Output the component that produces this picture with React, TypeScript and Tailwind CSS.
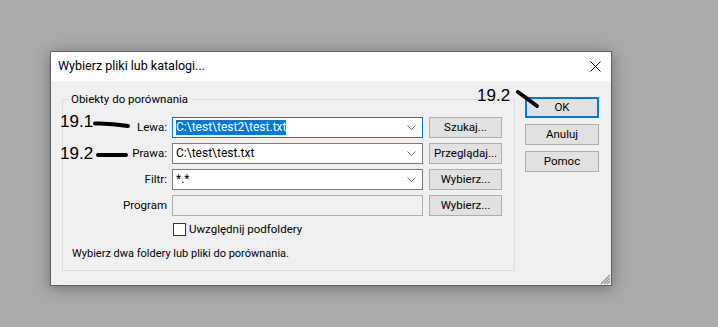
import React from 'react';

const ui = { fontFamily: 'Roboto, "Noto Sans", sans-serif' };
const ink = { fontFamily: '"Liberation Sans", Arial, sans-serif' };

function Chevron() {
  return (
    <svg width="9" height="5" viewBox="0 0 9 5" className="shrink-0">
      <path d="M0.5 0.5 L4.5 4.5 L8.5 0.5" fill="none" stroke="#6d6d6d" strokeWidth="1" />
    </svg>
  );
}

function Combo({ value, focused, selected }: { value: string; focused?: boolean; selected?: boolean }) {
  return (
    <div
      className={`w-[251px] h-[21px] bg-white flex items-center pl-[3px] pr-[6px] border text-[12px] ${
        focused ? 'border-[#0078d7]' : 'border-[#7a7a7a]'
      }`}
    >
      <div className="flex-1 min-w-0 flex">
        <span className={`leading-[15px] ${selected ? 'bg-[#0078d7] text-white' : 'text-black'}`}>{value}</span>
      </div>
      <Chevron />
    </div>
  );
}

function Btn({ label, w = 'w-[73px]', primary }: { label: string; w?: string; primary?: boolean }) {
  return (
    <div
      className={`${w} h-[21px] bg-[#e1e1e1] flex items-center justify-center text-black ${
        primary ? 'border-2 border-[#0078d7]' : 'border border-[#adadad]'
      }`}
    >
      {label}
    </div>
  );
}

export default function App() {
  const rows = [
    { label: 'Lewa:', value: 'C:\\test\\test2\\test.txt', btn: 'Szukaj...', focused: true, selected: true },
    { label: 'Prawa:', value: 'C:\\test\\test.txt', btn: 'Przeglądaj...' },
    { label: 'Filtr:', value: '*.*', btn: 'Wybierz...' },
  ];

  return (
    <div className="relative w-[718px] h-[327px] bg-[#aaaaaa] overflow-hidden pt-[51px] pl-[50px]" style={ui}>
      {/* okno dialogu */}
      <div className="w-[562px] h-[235px] flex flex-col border border-[#5f5f5f] shadow-[0_2px_14px_rgba(0,0,0,0.35)] text-[11.5px] text-black">
        <div className="h-[29px] bg-white flex items-center justify-between pl-[7px] pr-[10px] shrink-0">
          <span className="text-[12.5px]">Wybierz pliki lub katalogi...</span>
          <svg width="11" height="11" viewBox="0 0 11 11">
            <path d="M0.5 0.5 L10.5 10.5 M10.5 0.5 L0.5 10.5" stroke="#000" strokeWidth="1" />
          </svg>
        </div>

        <div className="relative flex-1 bg-[#f0f0f0] flex pl-[11px] pt-[18px]">
          {/* grupa */}
          <div className="relative w-[453px] h-[172px] border border-[#dcdcdc] flex flex-col pt-[17px]">
            <span className="absolute -top-[9px] left-[6px] px-[2px] bg-[#f0f0f0] leading-[16px]">
              Obiekty do porównania
            </span>

            {rows.map((r) => (
              <div key={r.label} className="flex items-center h-[21px] mb-[5px]">
                <span className="w-[105px] text-right pr-[1px]">{r.label}</span>
                <div className="ml-[4px]">
                  <Combo value={r.value} focused={r.focused} selected={r.selected} />
                </div>
                <div className="ml-[6px]">
                  <Btn label={r.btn} />
                </div>
              </div>
            ))}

            <div className="flex items-center h-[21px]">
              <span className="w-[105px] text-right pr-[1px]">Program</span>
              <div className="ml-[4px] w-[251px] h-[21px] bg-[#f0f0f0] border border-[#adadad]" />
              <div className="ml-[6px]">
                <Btn label="Wybierz..." />
              </div>
            </div>

            <div className="flex items-center ml-[110px] mt-[6px] h-[15px]">
              <div className="w-[13px] h-[13px] bg-white border border-[#333]" />
              <span className="ml-[3px]">Uwzględnij podfoldery</span>
            </div>

            <div className="ml-[9px] mt-[9px] leading-[16px] text-[11px]">Wybierz dwa foldery lub pliki do porównania.</div>
          </div>

          {/* przyciski */}
          <div className="ml-[10px] -mt-[2px] flex flex-col gap-[6px]">
            <Btn label="OK" w="w-[74px]" primary />
            <Btn label="Anuluj" w="w-[74px]" />
            <Btn label="Pomoc" w="w-[74px]" />
          </div>

          {/* uchwyt zmiany rozmiaru */}
          <svg width="12" height="12" viewBox="0 0 12 12" className="absolute right-0 bottom-0">
            <path d="M11 2 L2 11 M11 5 L5 11 M11 8 L8 11" stroke="#9a9a9a" strokeWidth="1.5" />
          </svg>
        </div>
      </div>

      {/* adnotacje */}
      <span className="absolute left-[60px] top-[112px] text-[17px] leading-[20px] text-black" style={ink}>19.1</span>
      <span className="absolute left-[60px] top-[144px] text-[17px] leading-[20px] text-black" style={ink}>19.2</span>
      <span className="absolute left-[477px] top-[86px] text-[17px] leading-[20px] text-black" style={ink}>19.2</span>
      <svg className="absolute left-0 top-0" width="718" height="327" viewBox="0 0 718 327">
        <path d="M95 123.5 Q110 123 128 126" stroke="#000" strokeWidth="4" strokeLinecap="round" fill="none" />
        <path d="M98 155 L126 155" stroke="#000" strokeWidth="4" strokeLinecap="round" fill="none" />
        <path d="M518 92 L537 106" stroke="#000" strokeWidth="4" strokeLinecap="round" fill="none" />
      </svg>
    </div>
  );
}
